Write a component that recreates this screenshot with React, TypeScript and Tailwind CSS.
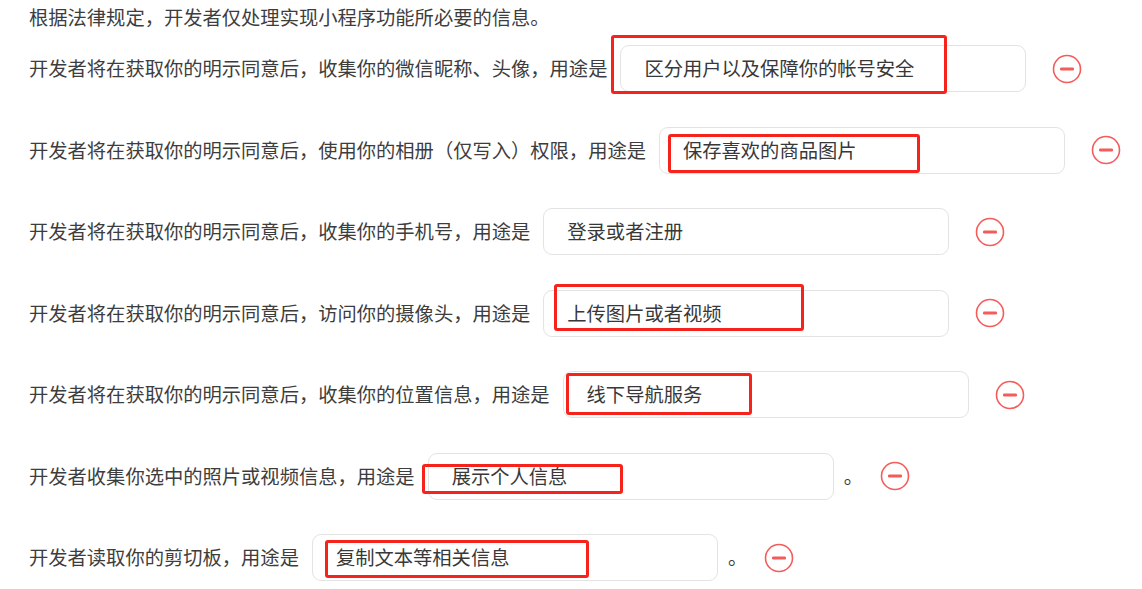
import React from "react";

interface Row {
  label: string;
  value: string;
  inputLeft?: number;
  period?: boolean;
  mark?: { left: number; top: number; w: number; h: number };
}

const rows: Row[] = [
  {
    label: "开发者将在获取你的明示同意后，收集你的微信昵称、头像，用途是",
    value: "区分用户以及保障你的帐号安全",
    mark: { left: -10, top: -11, w: 336, h: 59 },
  },
  {
    label: "开发者将在获取你的明示同意后，使用你的相册（仅写入）权限，用途是",
    value: "保存喜欢的商品图片",
    mark: { left: 8, top: 6, w: 252, h: 39 },
  },
  {
    label: "开发者将在获取你的明示同意后，收集你的手机号，用途是",
    value: "登录或者注册",
  },
  {
    label: "开发者将在获取你的明示同意后，访问你的摄像头，用途是",
    value: "上传图片或者视频",
    mark: { left: 10, top: -7, w: 250, h: 47 },
  },
  {
    label: "开发者将在获取你的明示同意后，收集你的位置信息，用途是",
    value: "线下导航服务",
    mark: { left: 2, top: 1, w: 186, h: 42 },
  },
  {
    label: "开发者收集你选中的照片或视频信息，用途是",
    value: "展示个人信息",
    period: true,
    mark: { left: -7, top: 10, w: 201, h: 30 },
  },
  {
    label: "开发者读取你的剪切板，用途是",
    value: "复制文本等相关信息",
    period: true,
    mark: { left: 12, top: 5, w: 264, h: 38 },
  },
];

function MinusIcon() {
  return (
    <svg width="30" height="30" viewBox="0 0 30 30" className="shrink-0">
      <circle cx="15" cy="15" r="13.5" fill="none" stroke="#f45b5b" strokeWidth="1.6" />
      <rect x="8" y="13.6" width="14" height="2.8" rx="1.2" fill="#f45b5b" />
    </svg>
  );
}

function PurposeRow({ row }: { row: Row }) {
  return (
    <div className="flex items-center h-[47px]">
      <span className="whitespace-nowrap">{row.label}</span>
      <div className="relative ml-[13px] w-[406px] h-[47px] shrink-0 rounded-[9px] border border-[#e3e3e3] bg-white flex items-center pl-[23px] text-[#383838]">
        {row.value}
        {row.mark && (
          <div
            className="absolute border-[3px] border-[#f5231c] rounded-[3px] pointer-events-none"
            style={{ left: row.mark.left, top: row.mark.top, width: row.mark.w, height: row.mark.h }}
          />
        )}
      </div>
      {row.period ? (
        <>
          <span className="ml-[10px]">。</span>
          <span className="ml-[17px]">
            <MinusIcon />
          </span>
        </>
      ) : (
        <span className="ml-[26px]">
          <MinusIcon />
        </span>
      )}
    </div>
  );
}

export default function App() {
  return (
    <main
      className="min-h-screen w-[1142px] h-[589px] overflow-hidden bg-white pt-[3px] px-[29px] text-[19.3px] text-[#3d3d3d]"
      style={{ fontFamily: '"Noto Sans CJK SC", "Noto Sans", sans-serif' }}
    >
      <p className="leading-[28px]">根据法律规定，开发者仅处理实现小程序功能所必要的信息。</p>
      <div className="mt-[14px] flex flex-col gap-[34.5px]">
        {rows.map((row, i) => (
          <PurposeRow key={i} row={row} />
        ))}
      </div>
    </main>
  );
}
